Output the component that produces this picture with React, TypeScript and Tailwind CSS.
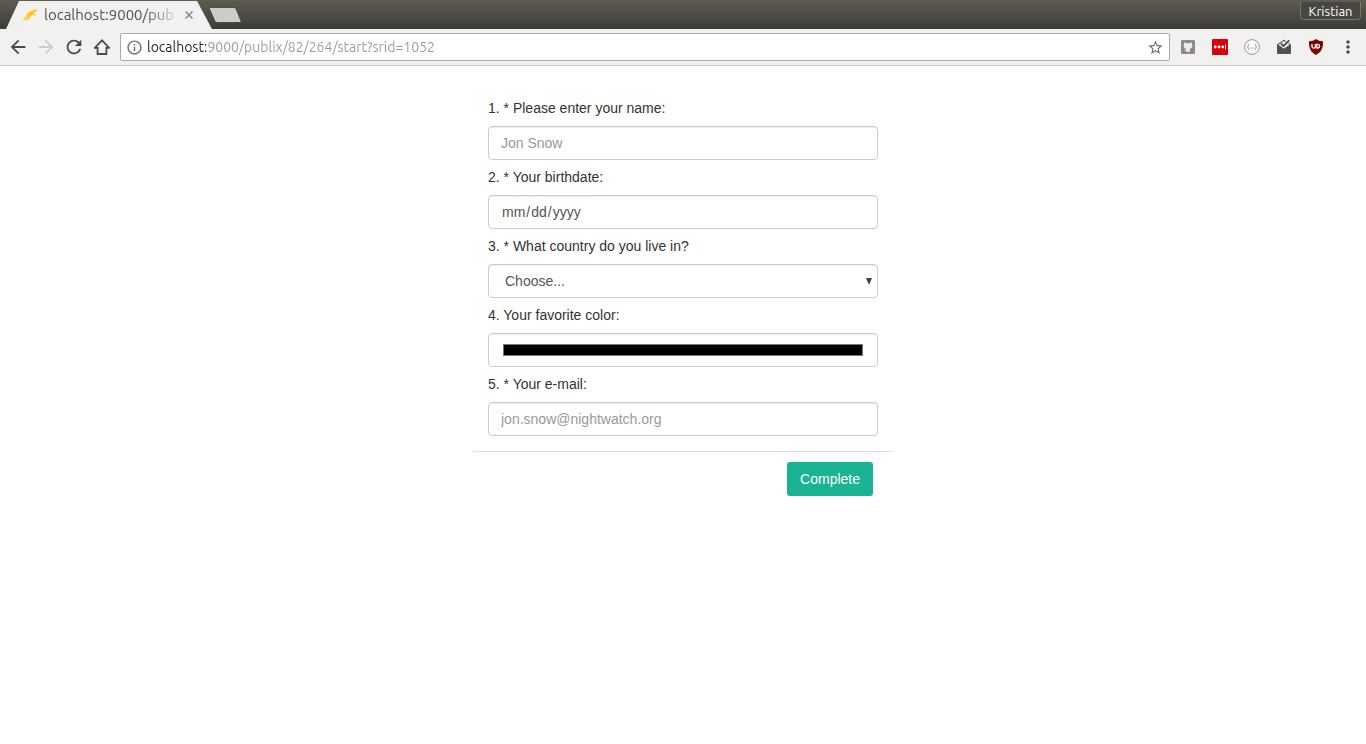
import { useState } from 'react';
import type { ReactNode } from 'react';
import { MdArrowBack, MdArrowForward, MdInfoOutline, MdMoreVert, MdRefresh, MdStarBorder } from 'react-icons/md';

const fieldClass =
  'block h-[34px] w-full rounded border border-[#ccc] bg-white px-3 py-1.5 text-sm leading-5 text-[#555] shadow-[inset_0_1px_1px_rgba(0,0,0,0.075)] outline-none placeholder:text-[#999] focus:border-[#66afe9]';

function HomeIcon() {
  return (
    <svg viewBox="0 0 16 16" className="size-4" fill="none" stroke="#4a4a4a" strokeWidth="1.8">
      <path d="M0.6 9.2 8 1.4l7.4 7.8" />
      <path d="M.4 8.800h3.200V15h8.800V8.800h3.200" />
    </svg>
  );
}

function KangarooIcon() {
  return (
    <svg viewBox="0 0 16 16" className="h-4 w-4 shrink-0" fill="#fcc81e">
      <path d="M15.700 3.800 13.600 2.300 12.400 1.900l.2 1.200-2 .6C8.400 3.800 6 4.900 5 7.400 4.200 9.500 2.600 11.500 0 13.300c2.400-.1 4.400-1.200 5.600-3l1.200.5-1.800 1.300-1.900 1 2.800-.2 2.700-2.200-.6-1.200c1.400-.2 2.300-.9 2.800-1.900l1.300.5.3 1.200.9-.1-.3-1.900-1.300-.8.5-1.400 1.400-.4z" />
    </svg>
  );
}

function GithubIcon() {
  return (
    <svg viewBox="0 0 14 14" className="size-3.5">
      <rect width="14" height="14" rx="1.5" fill="#8a8a8a" />
      <path
        d="M3.200 2.200l1.900 1q1.900-.4 3.800 0l1.900-1 .3 2.200c.6 2.400-.2 3.900-2.200 4.400l.1 3H5.200v-1.300c-1.300.3-1.800-.5-2.200-1.200.9 0 1 .6 2.200.4L5.300 8.800C3 8.200 2.300 6.800 2.900 4.400z"
        fill="#efedec"
      />
    </svg>
  );
}

function LastPassIcon() {
  return (
    <svg viewBox="0 0 16 16" className="size-4">
      <rect width="16" height="16" rx="1" fill="#d90007" />
      <circle cx="3.2" cy="8" r="1.4" fill="#fff" />
      <circle cx="7" cy="8" r="1.4" fill="#fff" />
      <circle cx="10.8" cy="8" r="1.4" fill="#fff" />
      <path d="M13.5 5.500v5" stroke="#fff" strokeWidth="1" />
    </svg>
  );
}

function BracesIcon() {
  return (
    <svg viewBox="0 0 16 16" className="size-4" fill="none" stroke="#949494">
      <circle cx="8" cy="8" r="7.400" fill="#fafafa" />
      <path d="M5.200 5.300c-1.100 0-.9.700-.9 1.500S4 8 3.300 8c.7 0 1 .4 1 1.200s-.2 1.500.9 1.500M10.800 5.300c1.100 0 .9.700.9 1.500s.3 1.200 1 1.200c-.7 0-1 .4-1 1.200s.2 1.500-.9 1.500" />
      <path d="M6 9h.8M7.600 9h.8M9.200 9h.8" />
    </svg>
  );
}

function InboxIcon() {
  return (
    <svg viewBox="0 0 16 16" className="size-4">
      <path d="M1 5.500 8 .8l7 4.700V14a1 1 0 0 1-1 1H2a1 1 0 0 1-1-1z" fill="#505050" />
      <path d="M2.200 5.800 8 1.900l5.800 3.900L8 9.600z" fill="#efedec" />
      <path d="m4.800 4.400 2.700 2.700 5.700-5.700" fill="none" stroke="#efedec" strokeWidth="3.400" />
      <path d="m4.800 4.400 2.700 2.700 5.700-5.700" fill="none" stroke="#444" strokeWidth="1.700" />
    </svg>
  );
}

function ShieldIcon() {
  return (
    <svg viewBox="0 0 16 16" className="size-4" fill="none">
      <path d="M8 0c2 1.500 4.300 2.200 7 2.300C15.200 9 13.500 13.200 8 16 2.500 13.200.8 9 1 2.300 3.700 2.200 6 1.500 8 0z" fill="#800000" />
      <path d="M4 5v2.400a1.700 1.700 0 0 0 3.400 0V5" stroke="#fff" strokeWidth="1.300" />
      <path d="M8.800 5.400h1a1.800 1.800 0 0 1 0 3.600h-1z" stroke="#fff" strokeWidth="1.300" />
    </svg>
  );
}

function ToolButton({ label, children }: { label: string; children: ReactNode }) {
  return (
    <button type="button" aria-label={label} className="flex size-6 shrink-0 items-center justify-center text-[#4a4a4a]">
      {children}
    </button>
  );
}

function TitleBar() {
  return (
    <div className="flex h-[29px] items-end justify-between bg-linear-to-b from-[#5f5d50] to-[#3c3b37] pl-1.5">
      <div className="flex h-7 items-start">
        <div className="flex h-7 w-[206px] items-center bg-[#f2f1f0] pl-4 [clip-path:polygon(0_100%,13px_0,191px_0,100%_100%)]">
          <KangarooIcon />
          <span className="ml-1.5 w-[134px] overflow-hidden bg-linear-to-r from-[#4a4a4a] from-75% to-[#e4e4e4] bg-clip-text text-[15px] leading-6 whitespace-nowrap text-transparent">
            localhost:9000/pub
          </span>
          <button type="button" aria-label="Close tab" className="ml-[3px] flex size-4 items-center justify-center">
            <svg viewBox="0 0 8 8" className="size-2" stroke="#888" strokeWidth="1.5">
              <path d="m.5.5 7 7m0-7-7 7" />
            </svg>
          </button>
        </div>
        <button type="button" aria-label="New tab" className="-ml-1 mt-1.5">
          <svg viewBox="0 0 34 16" className="h-4 w-[34px]">
            <path d="M2.500.5h23.500q1.500 0 2 1.300L33 14q.4 1.500-1 1.500H9q-1.500 0-2-1.300L1.500 2Q1.200.5 2.500.5z" fill="#cecccb" stroke="#34332f" strokeWidth=".7" />
          </svg>
        </button>
      </div>
      <button
        type="button"
        className="mr-[5px] mb-[9px] h-[18px] w-[61px] rounded-b border border-t-0 border-[#77756b] bg-[#474640] text-[13px] leading-4 text-white"
      >
        Kristian
      </button>
    </div>
  );
}

function Toolbar() {
  return (
    <div className="flex h-[37px] items-center border-b border-[#cbcac9] bg-[#f2f1f0] pr-1.5 pl-1.5">
      <div className="flex gap-1">
        <ToolButton label="Back">
          <MdArrowBack size={22} />
        </ToolButton>
        <ToolButton label="Forward">
          <MdArrowForward size={22} color="#ccc" />
        </ToolButton>
        <ToolButton label="Reload">
          <MdRefresh size={22} />
        </ToolButton>
        <ToolButton label="Home">
          <HomeIcon />
        </ToolButton>
      </div>
      <div className="ml-1.5 flex h-7 flex-1 items-center rounded-xs border border-[#aaa] bg-white px-[5px]">
        <MdInfoOutline size={17} color="#6e6e6e" />
        <input
          type="text"
          aria-label="Address"
          defaultValue="localhost:9000/publix/82/264/start?srid=1052"
          className="ml-1 min-w-0 flex-1 bg-linear-to-r from-[#222] from-[59px] to-[#999] to-[59px] bg-clip-text text-sm text-transparent outline-none"
        />
        <MdStarBorder size={17} color="#6e6e6e" />
      </div>
      <div className="ml-1.5 flex gap-2">
        <ToolButton label="GitHub">
          <GithubIcon />
        </ToolButton>
        <ToolButton label="Password manager">
          <LastPassIcon />
        </ToolButton>
        <ToolButton label="JSON viewer">
          <BracesIcon />
        </ToolButton>
        <ToolButton label="Inbox">
          <InboxIcon />
        </ToolButton>
        <ToolButton label="Ad blocker">
          <ShieldIcon />
        </ToolButton>
        <ToolButton label="Menu">
          <MdMoreVert size={20} />
        </ToolButton>
      </div>
    </div>
  );
}

function Question({ id, title, children }: { id: string; title: string; children: ReactNode }) {
  return (
    <div className="pt-[7px]">
      <label htmlFor={id} className="block pb-2 text-sm leading-5">
        {title}
      </label>
      {children}
    </div>
  );
}

function Survey() {
  const [country, setCountry] = useState('');

  return (
    <form className="mx-auto w-full max-w-[420px] pt-[25px]" onSubmit={(e) => e.preventDefault()}>
      <div className="border-b border-[#ddd] px-[15px] pb-[15px]">
        <Question id="name" title="1. * Please enter your name:">
          <input id="name" type="text" placeholder="Jon Snow" className={fieldClass} />
        </Question>
        <Question id="birthdate" title="2. * Your birthdate:">
          <input id="birthdate" type="date" className={`${fieldClass} [&::-webkit-calendar-picker-indicator]:hidden`} />
        </Question>
        <Question id="country" title="3. * What country do you live in?">
          <div className="relative">
            <select
              id="country"
              value={country}
              onChange={(e) => setCountry(e.target.value)}
              className={`${fieldClass} appearance-none pl-4`}
            >
              <option value="">Choose...</option>
              <option value="de">Germany</option>
              <option value="fr">France</option>
              <option value="us">United States</option>
            </select>
            <svg viewBox="0 0 6 6" className="pointer-events-none absolute top-3.5 right-1.5 size-1.5" fill="#444">
              <path d="M0 0h6L3.500 6h-1z" />
            </svg>
          </div>
        </Question>
        <Question id="color" title="4. Your favorite color:">
          <input id="color" type="color" defaultValue="#000000" className={fieldClass} />
        </Question>
        <Question id="email" title="5. * Your e-mail:">
          <input id="email" type="email" placeholder="jon.snow@nightwatch.org" className={fieldClass} />
        </Question>
      </div>
      <div className="flex justify-end px-5 pt-2.5">
        <button type="submit" className="h-[34px] rounded-[3px] bg-[#1ab394] px-[13px] text-sm leading-5 text-white">
          Complete
        </button>
      </div>
    </form>
  );
}

export default function App() {
  return (
    <div className="min-h-screen bg-white font-['Liberation_Sans',Arial,sans-serif] text-[#333]">
      <header className="font-['Ubuntu','Noto_Sans',sans-serif]">
        <TitleBar />
        <Toolbar />
      </header>
      <main>
        <Survey />
      </main>
    </div>
  );
}
